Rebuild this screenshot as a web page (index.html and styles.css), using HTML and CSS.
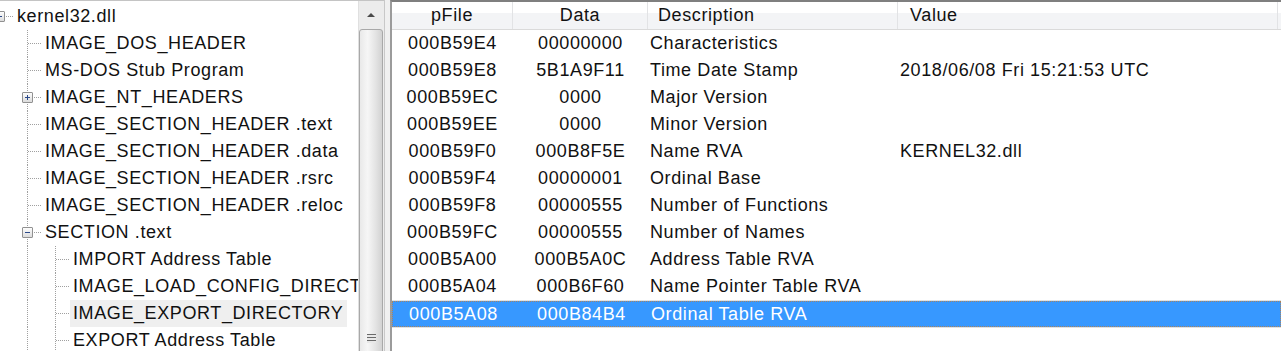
FILE: index.html
```html
<!DOCTYPE html>
<html lang="en">
<head>
    <meta charset="UTF-8">
    <title>kernel32.dll - IMAGE_EXPORT_DIRECTORY</title>
    <link rel="stylesheet" href="styles.css">
</head>
<body>
    <div class="window">
        <section class="tree-pane">
            <ul class="tree">
                <li class="node">
                    <span class="cell root"><i class="toggle open"></i></span>
                    <span class="label">kernel32.dll</span>
                </li>
                <li class="node">
                    <span class="cell"></span><span class="cell branch"></span>
                    <span class="label">IMAGE_DOS_HEADER</span>
                </li>
                <li class="node">
                    <span class="cell"></span><span class="cell branch"></span>
                    <span class="label">MS-DOS Stub Program</span>
                </li>
                <li class="node">
                    <span class="cell"></span><span class="cell branch"><i class="toggle"></i></span>
                    <span class="label">IMAGE_NT_HEADERS</span>
                </li>
                <li class="node">
                    <span class="cell"></span><span class="cell branch"></span>
                    <span class="label">IMAGE_SECTION_HEADER .text</span>
                </li>
                <li class="node">
                    <span class="cell"></span><span class="cell branch"></span>
                    <span class="label">IMAGE_SECTION_HEADER .data</span>
                </li>
                <li class="node">
                    <span class="cell"></span><span class="cell branch"></span>
                    <span class="label">IMAGE_SECTION_HEADER .rsrc</span>
                </li>
                <li class="node">
                    <span class="cell"></span><span class="cell branch"></span>
                    <span class="label">IMAGE_SECTION_HEADER .reloc</span>
                </li>
                <li class="node">
                    <span class="cell"></span><span class="cell branch"><i class="toggle open"></i></span>
                    <span class="label">SECTION .text</span>
                </li>
                <li class="node">
                    <span class="cell"></span><span class="cell pipe"></span><span class="cell branch"></span>
                    <span class="label">IMPORT Address Table</span>
                </li>
                <li class="node">
                    <span class="cell"></span><span class="cell pipe"></span><span class="cell branch"></span>
                    <span class="label">IMAGE_LOAD_CONFIG_DIRECTORY</span>
                </li>
                <li class="node">
                    <span class="cell"></span><span class="cell pipe"></span><span class="cell branch"></span>
                    <span class="label current">IMAGE_EXPORT_DIRECTORY</span>
                </li>
                <li class="node">
                    <span class="cell"></span><span class="cell pipe"></span><span class="cell branch"></span>
                    <span class="label">EXPORT Address Table</span>
                </li>
            </ul>
            <div class="vscroll">
                <div class="arrow-up"></div>
                <div class="thumb"><span class="grip"></span></div>
            </div>
        </section>

        <div class="splitter"></div>

        <section class="list-pane">
            <div class="list-head">
                <span class="center">pFile</span>
                <span class="center">Data</span>
                <span>Description</span>
                <span class="wide">Value</span>
                <span></span>
            </div>
            <div class="list-body">
                <div class="row"><span>000B59E4</span><span>00000000</span><span>Characteristics</span><span></span></div>
                <div class="row"><span>000B59E8</span><span>5B1A9F11</span><span>Time Date Stamp</span><span>2018/06/08 Fri 15:21:53 UTC</span></div>
                <div class="row"><span>000B59EC</span><span>0000</span><span>Major Version</span><span></span></div>
                <div class="row"><span>000B59EE</span><span>0000</span><span>Minor Version</span><span></span></div>
                <div class="row"><span>000B59F0</span><span>000B8F5E</span><span>Name RVA</span><span>KERNEL32.dll</span></div>
                <div class="row"><span>000B59F4</span><span>00000001</span><span>Ordinal Base</span><span></span></div>
                <div class="row"><span>000B59F8</span><span>00000555</span><span>Number of Functions</span><span></span></div>
                <div class="row"><span>000B59FC</span><span>00000555</span><span>Number of Names</span><span></span></div>
                <div class="row"><span>000B5A00</span><span>000B5A0C</span><span>Address Table RVA</span><span></span></div>
                <div class="row"><span>000B5A04</span><span>000B6F60</span><span>Name Pointer Table RVA</span><span></span></div>
                <div class="row selected"><span>000B5A08</span><span>000B84B4</span><span>Ordinal Table RVA</span><span></span></div>
            </div>
        </section>
    </div>
</body>
</html>
```

FILE: styles.css
```css
:root {
    --line: #a0a0a0;
    --text: #111;
    --sel: #3798ff;
    --row-h: 27px;
}

body {
    margin: 0;
    background: #fff;
    font-family: 'Liberation Sans', Arial, sans-serif;
    font-size: 18px;
    letter-spacing: 0.6px;
    color: var(--text);
    overflow: hidden;
}

.window {
    display: flex;
    height: 351px;
    width: 1281px;
}

/* left: tree view */

.tree-pane {
    display: flex;
    width: 384px;
    border-top: 1px solid #c4c4c4;
    box-sizing: border-box;
    overflow: hidden;
}

.tree {
    list-style: none;
    margin: 0;
    padding: 2px 0 0;
    width: 358px;
    flex: none;
    overflow: hidden;
}

.node {
    display: flex;
    align-items: center;
    height: var(--row-h);
    white-space: nowrap;
}

.node > .cell:first-child {
    margin-left: -15px;
}

.cell {
    position: relative;
    flex: none;
    width: 28px;
    height: 100%;
}

.cell.pipe::before,
.cell.branch::before {
    content: "";
    position: absolute;
    left: 14px;
    top: 0;
    bottom: 0;
    border-left: 1px dotted var(--line);
}

.cell.branch::after,
.cell.root::after {
    content: "";
    position: absolute;
    left: 15px;
    right: 0;
    top: 13px;
    border-top: 1px dotted var(--line);
}

.toggle {
    position: absolute;
    left: 9px;
    top: 8px;
    width: 9px;
    height: 9px;
    border: 1px solid #919191;
    border-radius: 1px;
    background: linear-gradient(#fdfdfd, #dcdcdc);
    z-index: 1;
}

.toggle::before,
.toggle::after {
    content: "";
    position: absolute;
    background: #2c4a8a;
}

.toggle::before {
    left: 2px;
    right: 2px;
    top: 4px;
    height: 1px;
}

.toggle::after {
    top: 2px;
    bottom: 2px;
    left: 4px;
    width: 1px;
}

.toggle.open::after {
    display: none;
}

.label {
    margin-left: 4px;
    padding: 0 4px 0 0;
    line-height: var(--row-h);
}

.label.current {
    background: #efefef;
    margin-left: 1px;
    padding-left: 3px;
    padding-right: 4px;
}

.vscroll {
    width: 26px;
    flex: none;
    display: flex;
    flex-direction: column;
    background: #ececec;
    border-left: 1px solid #e0e0e0;
    box-sizing: border-box;
    padding: 1px 1px 0 0;
    gap: 2px;
}

.arrow-up {
    height: 25px;
    display: grid;
    place-items: center;
}

.arrow-up::before {
    content: "";
    border-left: 4px solid transparent;
    border-right: 4px solid transparent;
    border-bottom: 4px solid #4a4a4a;
}

.thumb {
    flex: 1;
    margin-bottom: -20px;
    border: 1px solid #a8a8a8;
    border-radius: 3px;
    background: linear-gradient(to right, #e9e9e9, #f6f6f6 35%, #e4e4e4 70%, #d2d2d2);
    display: flex;
    align-items: flex-end;
    justify-content: center;
    padding-bottom: 27px;
}

.grip {
    width: 9px;
    height: 9px;
    background: repeating-linear-gradient(#6a6a6a 0 1px, #e8e8e8 1px 3px);
}

.splitter {
    width: 6px;
    flex: none;
    background: #f0f0f0;
    border-left: 1px solid #c8c8c8;
    box-sizing: border-box;
}

/* right: list view */

.list-pane {
    flex: 1;
    border-top: 2px solid #7f7f7f;
    border-left: 2px solid #9b9b9b;
    overflow: hidden;
}

.list-head,
.row {
    display: grid;
    grid-template-columns: 121px 135px 250px 380px 1fr;
    white-space: nowrap;
}

.list-head {
    height: 28px;
    background: linear-gradient(#fff 0 40%, #f3f4f6 40%);
    border-bottom: 1px solid #dadada;
    box-sizing: border-box;
}

.list-head span {
    line-height: 27px;
    padding-left: 10px;
    border-right: 1px solid #e2e3e5;
}

.list-head span.center {
    padding-left: 0;
    text-align: center;
}

.list-head span.wide {
    padding-left: 12px;
}

.row {
    height: var(--row-h);
    line-height: var(--row-h);
}

.row span {
    padding-left: 2px;
    overflow: hidden;
}

.row span:nth-child(-n+2) {
    text-align: center;
    padding-left: 0;
}

.row.selected {
    background: var(--sel);
    color: #fff;
    border: 1px dotted #a68462;
    box-shadow: 0 0 0 1px #e2e2e2;
    box-sizing: border-box;
    margin-top: 1px;
    height: 26px;
    line-height: 24px;
}
```
